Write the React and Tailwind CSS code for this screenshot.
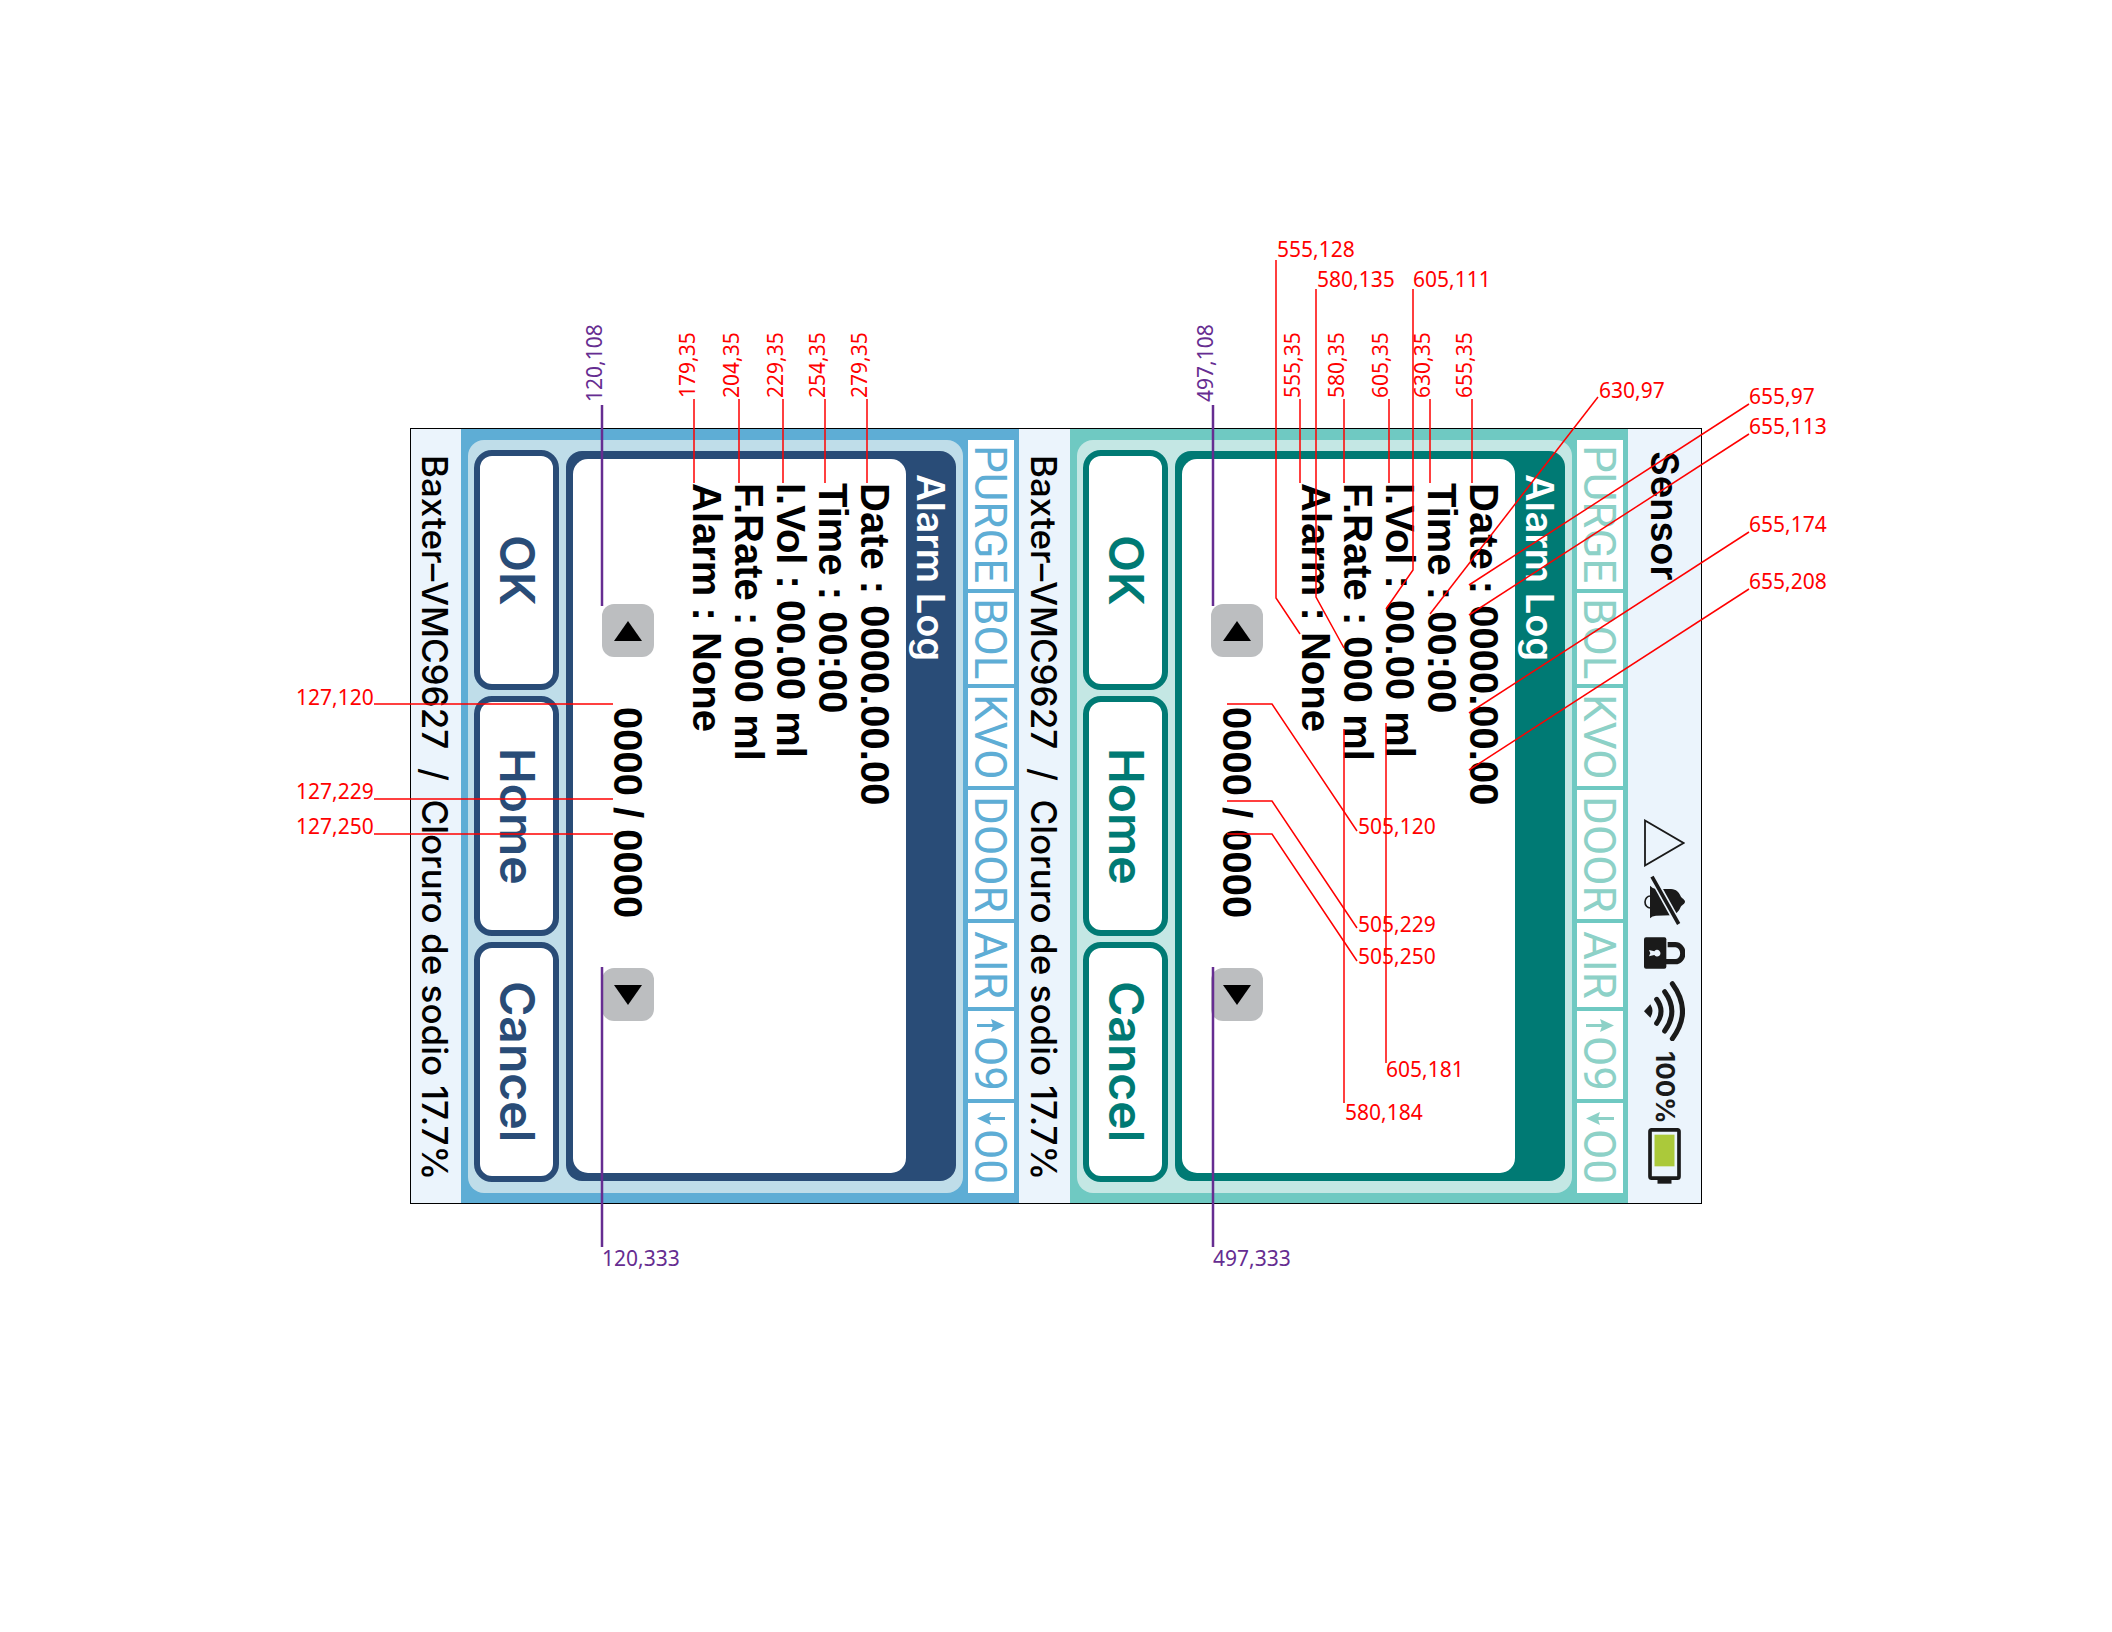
import React from "react";

const themes = {
  teal: {
    frame: "bg-[#6fc9c2]",
    pane: "bg-[#c4e7e4]",
    solid: "bg-[#007a74]",
    button: "border-[#007a74] text-[#007a74]",
    cell: "text-[#8dd1c7]",
  },
  blue: {
    frame: "bg-[#5eadd5]",
    pane: "bg-[#bfdde9]",
    solid: "bg-[#294c77]",
    button: "border-[#294c77] text-[#294c77]",
    cell: "text-[#5eadd5]",
  },
};

const rows = [
  "Date : 0000.00.00",
  "Time : 00:00",
  "I.Vol : 00.00 ml",
  "F.Rate : 000 ml",
  "Alarm : None",
];

const cells = [
  { text: "PURGE" },
  { text: "BOL" },
  { text: "KVO" },
  { text: "DOOR" },
  { text: "AIR" },
  { text: "O9", arrow: "up" },
  { text: "O0", arrow: "down" },
];

function CellArrow({ direction }) {
  return (
    <svg viewBox="0 0 84 39" className="h-[13px] w-7" fill="currentColor" aria-hidden="true">
      {direction === "up" ? (
        <path d="M0 15h47L42 0l42 19.500L42 39l5-15H0z" />
      ) : (
        <path d="M84 15H37L42 0 0 19.500 42 39l-5-15h47z" />
      )}
    </svg>
  );
}

function PagerButton({ direction }) {
  return (
    <button
      type="button"
      aria-label={direction === "up" ? "Previous alarm" : "Next alarm"}
      className="flex h-[53px] w-[52px] items-center justify-center rounded-xl bg-[#bcbec0]"
    >
      <svg viewBox="0 0 28 20" className="h-5 w-7" aria-hidden="true">
        <path d={direction === "up" ? "M0 20 14 0l14 20z" : "M0 0h28L14 20z"} />
      </svg>
    </button>
  );
}

function Panel({ theme }) {
  const t = themes[theme];
  return (
    <section className={`flex flex-row-reverse gap-[5px] pt-[11px] pr-[5px] pb-2.5 pl-[7px] ${t.frame}`}>
      <ul className="grid w-[46px] grid-rows-[148fr_91fr_98fr_128fr_84fr_87fr_90fr] gap-1">
        {cells.map((c) => (
          <li key={c.text} className={`flex flex-col items-center justify-center gap-1 bg-white ${t.cell}`}>
            {c.arrow && <CellArrow direction={c.arrow} />}
            <span className="[writing-mode:vertical-rl] pr-0.5 font-[Roboto,sans-serif] text-[44px] leading-[44px]">{c.text}</span>
          </li>
        ))}
      </ul>
      <div className={`flex flex-row-reverse gap-[7px] rounded-2xl pt-2.5 pr-[7px] pb-[11px] pl-1.5 ${t.pane}`}>
        <div className={`my-px flex flex-row-reverse rounded-2xl pt-2 pb-2 pl-[7px] ${t.solid}`}>
          <h2 className="[writing-mode:vertical-rl] pt-[15px] text-[38px] leading-[50px] font-semibold text-white">Alarm Log</h2>
          <div className="flex w-[333px] flex-row-reverse justify-between rounded-[15px] bg-white pr-2.5 pl-[29px]">
            <div className="[writing-mode:vertical-rl] pt-6 font-['Liberation_Sans',sans-serif] text-[40px] leading-[42px] font-bold">
              {rows.map((r) => (
                <p key={r}>{r}</p>
              ))}
            </div>
            <div className="mt-[145px] flex h-[417px] flex-col items-center justify-between">
              <PagerButton direction="up" />
              <p className="[writing-mode:vertical-rl] font-['Liberation_Sans',sans-serif] text-[40px] leading-[52px] font-bold">
                0000 / 0000
              </p>
              <PagerButton direction="down" />
            </div>
          </div>
        </div>
        <div className="flex w-[85px] flex-col gap-1.5">
          {["OK", "Home", "Cancel"].map((label) => (
            <button
              key={label}
              type="button"
              className={`flex flex-1 items-center justify-center rounded-[18px] border-6 bg-white ${t.button}`}
            >
              <span className="[writing-mode:vertical-rl] text-[48px] leading-[56px] font-semibold">{label}</span>
            </button>
          ))}
        </div>
      </div>
    </section>
  );
}

function DrugStrip({ width }) {
  return (
    <p className={`[writing-mode:vertical-rl] bg-[#ebf4fc] pt-[26px] pr-0.5 text-[35px] leading-[48px] font-medium whitespace-pre ${width}`}>
      {"Baxter–VMC9627  /  Cloruro de sodio 17.7%"}
    </p>
  );
}

function StatusStrip() {
  return (
    <header className="flex w-[73px] flex-col items-center bg-[#ebf4fc] pt-[22px] pb-[19px] text-[#1a1a1a]">
      <h1 className="[writing-mode:vertical-rl] text-[38px] leading-[46px] font-semibold text-black">Sensor</h1>
      <svg viewBox="0 0 41 48" className="mt-auto h-12 w-[41px]" fill="none" stroke="currentColor" strokeWidth="1.800" aria-label="Warning">
        <path d="M1 1.500v45L39.500 24z" />
      </svg>
      <svg viewBox="27 24 123 150" className="mt-2 h-[50px] w-[41px]" aria-label="Alarm muted">
        <path d="M46 87a16 18 0 0 0 0 36" fill="none" stroke="currentColor" strokeWidth="5" />
        <path d="M45 56q7 8 18 10l22 0 23 0c16 1 24 9 29 22 2 5 13 10 13 16s-11 11-13 16c-5 13-14 23-29 25l-45 1q-12 1-18 8z" fill="currentColor" />
        <path d="M50 26 132 174" stroke="#ebf4fc" strokeWidth="21" />
        <path d="M51 29 131 171" stroke="currentColor" strokeWidth="11" />
      </svg>
      <svg viewBox="27 209 123 96" className="mt-3 h-8 w-[41px]" aria-label="Locked">
        <rect x="27" y="210" width="67" height="94" rx="6" fill="currentColor" />
        <path d="M98 232h23a22 25 0 0 1 0 51H92" fill="none" stroke="currentColor" strokeWidth="16" />
        <path d="M42 248l16 4a10 10 0 1 1 0 11l-16 4 4-9.500z" fill="#ebf4fc" />
      </svg>
      <svg viewBox="27 26 123 180" className="mt-3 h-[60px] w-[41px]" fill="none" stroke="currentColor" strokeWidth="15" strokeLinecap="round" aria-label="Wireless signal">
        <path d="M27 117 46 96q13 21 0 40z" fill="currentColor" stroke="none" />
        <path d="M65 81q26 36 0 72" />
        <path d="M89 58q43 59 0 118" />
        <path d="M112 34q61 83 0 165" />
      </svg>
      <span className="[writing-mode:vertical-rl] mt-2.5 text-[26px] leading-8 font-bold">100%</span>
      <svg viewBox="39 20 98 168" className="mt-1 h-14 w-[33px]" aria-label="Battery full">
        <rect x="44.500" y="25.500" width="87" height="145" rx="5" fill="none" stroke="currentColor" strokeWidth="11" />
        <rect x="58" y="40" width="60" height="95" fill="#abc93a" />
        <path d="M67 174h42v13H67z" fill="currentColor" />
      </svg>
    </header>
  );
}

/* Leader lines, in the device's own coordinate space. */
const redLines = [
  "284,-30 284,54",
  "329,-30 329,54",
  "373,-30 373,54",
  "415,-30 415,54",
  "457,-30 457,54",
  "890,-30 890,54",
  "934,-30 934,54",
  "979,-30 979,54",
  "1020,-30 1020,54",
  "1062,-30 1062,54",
  "-36,275 203,275",
  "-36,370 203,370",
  "-36,405 203,405",
  "866,-169 866,169 890,205",
  "906,-140 906,168 934,219",
  "1003,-140 1003,141 976,180",
  "1188,-32 1020,185",
  "1339,-25 1059,156",
  "1339,5 1059,186",
  "1339,103 1059,284",
  "1339,160 1059,341",
  "817,275 862,275 947,402",
  "817,372 862,372 947,499",
  "817,405 862,405 947,532",
  "976,294 976,634",
  "934,300 934,674",
];

const purpleLines = ["192,-24 192,177", "192,538 192,818", "803,-24 803,177", "803,538 803,818"];

const labels = [
  ["555,128", 867, -172],
  ["580,135", 907, -142],
  ["605,111", 1003, -142],
  ["630,97", 1189, -31],
  ["655,97", 1339, -25],
  ["655,113", 1339, 5],
  ["655,174", 1339, 103],
  ["655,208", 1339, 160],
  ["505,120", 948, 405],
  ["505,229", 948, 503],
  ["505,250", 948, 535],
  ["605,181", 976, 648],
  ["580,184", 935, 691],
  ["127,120", -114, 276],
  ["127,229", -114, 370],
  ["127,250", -114, 405],
];

const uprightLabels = [
  ["179,35", 285],
  ["204,35", 329],
  ["229,35", 373],
  ["254,35", 415],
  ["279,35", 457],
  ["555,35", 890],
  ["580,35", 934],
  ["605,35", 978],
  ["630,35", 1020],
  ["655,35", 1062],
];

function Annotations() {
  return (
    <svg
      viewBox="1 0 1290 774"
      className="pointer-events-none absolute inset-0 h-full w-full overflow-visible font-['Noto_Sans',sans-serif] text-[21px]"
    >
      <g fill="none" stroke="#ff0000" strokeWidth="1.500">
        {redLines.map((p) => (
          <polyline key={p} points={p} />
        ))}
      </g>
      <g fill="none" stroke="#662d91" strokeWidth="2.500">
        {purpleLines.map((p) => (
          <polyline key={p} points={p} />
        ))}
      </g>
      <g fill="#ff0000">
        {labels.map(([text, x, y]) => (
          <text key={text} x={x} y={y}>
            {text}
          </text>
        ))}
        {uprightLabels.map(([text, x]) => (
          <text key={text} transform={`translate(${x} -31) rotate(-90)`}>
            {text}
          </text>
        ))}
      </g>
      <g fill="#662d91">
        <text transform="translate(192 -27) rotate(-90)">120,108</text>
        <text transform="translate(803 -27) rotate(-90)">497,108</text>
        <text x="192" y="837">120,333</text>
        <text x="803" y="837">497,333</text>
      </g>
    </svg>
  );
}

export default function App() {
  return (
    <main className="flex min-h-screen items-center justify-center bg-white font-[Inter,sans-serif] text-black">
      <div className="relative flex h-[776px] flex-row-reverse border border-black">
        <StatusStrip />
        <Panel theme="teal" />
        <DrugStrip width="w-[51px]" />
        <Panel theme="blue" />
        <DrugStrip width="w-[50px]" />
        <Annotations />
      </div>
    </main>
  );
}
